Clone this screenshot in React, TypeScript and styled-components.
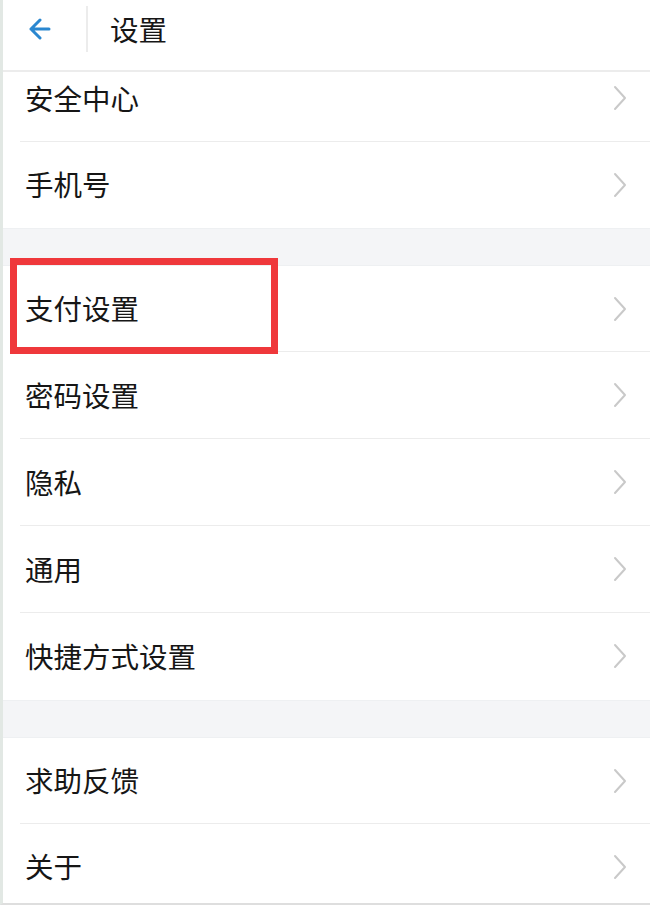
import React from "react";
import styled, { createGlobalStyle } from "styled-components";

const Global = createGlobalStyle`
  html, body { margin: 0; padding: 0; background: #ffffff; }
  * { box-sizing: border-box; }
`;

const Page = styled.div`
  width: 650px;
  height: 905px;
  overflow: hidden;
  background: #ffffff;
  border-left: 3px solid #e2e8e4;
  border-bottom: 2px solid #dedede;
  display: flex;
  flex-direction: column;
  font-family: "Noto Sans CJK SC", "Noto Sans", sans-serif;
  color: #161616;
`;

const Header = styled.header`
  flex: 0 0 72px;
  display: flex;
  align-items: center;
  border-bottom: 2px solid #ececec;
  padding-bottom: 12px;
`;

const BackButton = styled.button`
  width: 85px;
  height: 46px;
  border: none;
  background: transparent;
  padding: 0 0 0 26px;
  display: flex;
  align-items: center;
  border-right: 2px solid #ececec;
  cursor: pointer;
`;

const Title = styled.h1`
  margin: 0 0 0 22px;
  font-size: 28.5px;
  font-weight: 400;
  line-height: 1;
`;

const Section = styled.section`
  display: flex;
  flex-direction: column;
  flex: 0 0 auto;
`;

const Gap = styled.div`
  flex: 0 0 38px;
  background: #f4f5f7;
  border-top: 1px solid #eef0f2;
  border-bottom: 1px solid #eef0f2;
`;

const Row = styled.div<{ $h: number }>`
  position: relative;
  flex: 0 0 ${(p) => p.$h}px;
  height: ${(p) => p.$h}px;
  padding-left: 17px;
  display: flex;
`;

const RowInner = styled.div<{ $divider: boolean; $clipped?: boolean }>`
  flex: 1;
  display: flex;
  align-items: center;
  justify-content: space-between;
  padding: 0 22px ${(p) => (p.$clipped ? "17px" : "0")} 5px;
  border-bottom: 1px solid ${(p) => (p.$divider ? "#ececec" : "transparent")};
`;

const Label = styled.span`
  font-size: 28.5px;
  font-weight: 400;
  line-height: 1;
`;

const Highlight = styled.div`
  position: absolute;
  left: 7px;
  top: -8px;
  width: 268px;
  height: 96px;
  border: 7px solid #ef383b;
  pointer-events: none;
`;

const Chevron = () => (
  <svg width="16" height="26" viewBox="0 0 16 26" fill="none">
    <polyline points="3,2 13,13 3,24" stroke="#c9c9c9" strokeWidth="2" strokeLinecap="round" strokeLinejoin="round" />
  </svg>
);

const BackArrow = () => (
  <svg width="22" height="22" viewBox="0 0 22 22" fill="none">
    <path d="M11 2 L2 11 L11 20 M2 11 H20" stroke="#2a87d0" strokeWidth="3" strokeLinecap="round" strokeLinejoin="round" />
  </svg>
);

type Item = { label: string; h: number; divider: boolean; clipped?: boolean; highlight?: boolean };

const sections: Item[][] = [
  [
    { label: "安全中心", h: 70, divider: true, clipped: true },
    { label: "手机号", h: 86, divider: false },
  ],
  [
    { label: "支付设置", h: 86, divider: true, highlight: true },
    { label: "密码设置", h: 87, divider: true },
    { label: "隐私", h: 87, divider: true },
    { label: "通用", h: 87, divider: true },
    { label: "快捷方式设置", h: 87, divider: false },
  ],
  [
    { label: "求助反馈", h: 86, divider: true },
    { label: "关于", h: 86, divider: false },
  ],
];

export default function App() {
  return (
    <>
      <Global />
      <Page>
        <Header>
          <BackButton aria-label="返回">
            <BackArrow />
          </BackButton>
          <Title>设置</Title>
        </Header>
        {sections.map((items, si) => (
          <React.Fragment key={si}>
            {si > 0 && <Gap />}
            <Section>
              {items.map((it) => (
                <Row key={it.label} $h={it.h}>
                  <RowInner $divider={it.divider} $clipped={it.clipped}>
                    <Label>{it.label}</Label>
                    <Chevron />
                  </RowInner>
                  {it.highlight && <Highlight />}
                </Row>
              ))}
            </Section>
          </React.Fragment>
        ))}
      </Page>
    </>
  );
}
